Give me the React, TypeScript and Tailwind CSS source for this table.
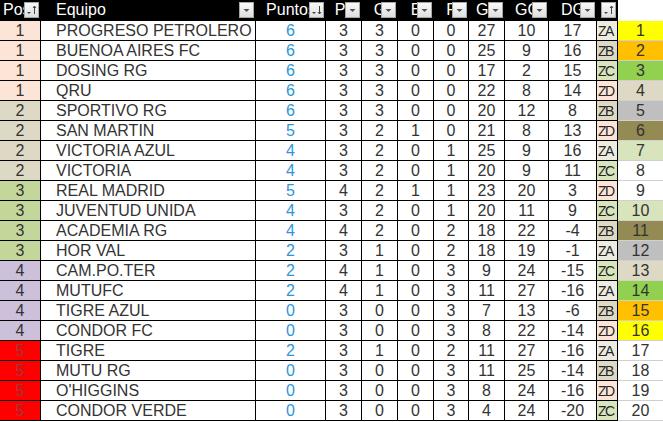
import React from 'react';

type Row = {
  pos: number;
  team: string;
  pts: number;
  pj: number;
  g: number;
  e: number;
  p: number;
  gf: number;
  gc: number;
  dg: number;
  zone: string;
  rank: number;
};

const rows: Row[] = [
  { pos: 1, team: 'PROGRESO PETROLERO', pts: 6, pj: 3, g: 3, e: 0, p: 0, gf: 27, gc: 10, dg: 17, zone: 'ZA', rank: 1 },
  { pos: 1, team: 'BUENOA AIRES FC', pts: 6, pj: 3, g: 3, e: 0, p: 0, gf: 25, gc: 9, dg: 16, zone: 'ZB', rank: 2 },
  { pos: 1, team: 'DOSING RG', pts: 6, pj: 3, g: 3, e: 0, p: 0, gf: 17, gc: 2, dg: 15, zone: 'ZC', rank: 3 },
  { pos: 1, team: 'QRU', pts: 6, pj: 3, g: 3, e: 0, p: 0, gf: 22, gc: 8, dg: 14, zone: 'ZD', rank: 4 },
  { pos: 2, team: 'SPORTIVO RG', pts: 6, pj: 3, g: 3, e: 0, p: 0, gf: 20, gc: 12, dg: 8, zone: 'ZB', rank: 5 },
  { pos: 2, team: 'SAN MARTIN', pts: 5, pj: 3, g: 2, e: 1, p: 0, gf: 21, gc: 8, dg: 13, zone: 'ZD', rank: 6 },
  { pos: 2, team: 'VICTORIA AZUL', pts: 4, pj: 3, g: 2, e: 0, p: 1, gf: 25, gc: 9, dg: 16, zone: 'ZA', rank: 7 },
  { pos: 2, team: 'VICTORIA', pts: 4, pj: 3, g: 2, e: 0, p: 1, gf: 20, gc: 9, dg: 11, zone: 'ZC', rank: 8 },
  { pos: 3, team: 'REAL MADRID', pts: 5, pj: 4, g: 2, e: 1, p: 1, gf: 23, gc: 20, dg: 3, zone: 'ZD', rank: 9 },
  { pos: 3, team: 'JUVENTUD UNIDA', pts: 4, pj: 3, g: 2, e: 0, p: 1, gf: 20, gc: 11, dg: 9, zone: 'ZC', rank: 10 },
  { pos: 3, team: 'ACADEMIA RG', pts: 4, pj: 4, g: 2, e: 0, p: 2, gf: 18, gc: 22, dg: -4, zone: 'ZB', rank: 11 },
  { pos: 3, team: 'HOR VAL', pts: 2, pj: 3, g: 1, e: 0, p: 2, gf: 18, gc: 19, dg: -1, zone: 'ZA', rank: 12 },
  { pos: 4, team: 'CAM.PO.TER', pts: 2, pj: 4, g: 1, e: 0, p: 3, gf: 9, gc: 24, dg: -15, zone: 'ZC', rank: 13 },
  { pos: 4, team: 'MUTUFC', pts: 2, pj: 4, g: 1, e: 0, p: 3, gf: 11, gc: 27, dg: -16, zone: 'ZA', rank: 14 },
  { pos: 4, team: 'TIGRE AZUL', pts: 0, pj: 3, g: 0, e: 0, p: 3, gf: 7, gc: 13, dg: -6, zone: 'ZB', rank: 15 },
  { pos: 4, team: 'CONDOR FC', pts: 0, pj: 3, g: 0, e: 0, p: 3, gf: 8, gc: 22, dg: -14, zone: 'ZD', rank: 16 },
  { pos: 5, team: 'TIGRE', pts: 2, pj: 3, g: 1, e: 0, p: 2, gf: 11, gc: 27, dg: -16, zone: 'ZA', rank: 17 },
  { pos: 5, team: 'MUTU RG', pts: 0, pj: 3, g: 0, e: 0, p: 3, gf: 11, gc: 25, dg: -14, zone: 'ZB', rank: 18 },
  { pos: 5, team: "O'HIGGINS", pts: 0, pj: 3, g: 0, e: 0, p: 3, gf: 8, gc: 24, dg: -16, zone: 'ZD', rank: 19 },
  { pos: 5, team: 'CONDOR VERDE', pts: 0, pj: 3, g: 0, e: 0, p: 3, gf: 4, gc: 24, dg: -20, zone: 'ZC', rank: 20 },
];

const posColors: Record<number, string> = {
  1: 'bg-[#fce4d6] text-[#333333]',
  2: 'bg-[#ddd9c4] text-[#333333]',
  3: 'bg-[#c4d79b] text-[#333333]',
  4: 'bg-[#ccc0da] text-[#333333]',
  5: 'bg-[#ff0000] text-[#9a3a3a]',
};

const zoneColors: Record<string, string> = {
  ZA: 'bg-[#eeece1]',
  ZB: 'bg-[#ddd9c4]',
  ZC: 'bg-[#d8e4bc]',
  ZD: 'bg-[#fce4d6]',
};

const rankColors: Record<number, string> = {
  1: 'bg-[#ffff00]',
  2: 'bg-[#ffc000]',
  3: 'bg-[#92d050]',
  4: 'bg-[#ddd9c4]',
  5: 'bg-[#bfbfbf]',
  6: 'bg-[#948a54]',
  7: 'bg-[#d8e4bc]',
  10: 'bg-[#d8e4bc]',
  11: 'bg-[#948a54]',
  12: 'bg-[#bfbfbf]',
  13: 'bg-[#ddd9c4]',
  14: 'bg-[#92d050]',
  15: 'bg-[#ffc000]',
  16: 'bg-[#ffff00]',
};

// small excel-like filter button
function FilterButton({ sort }: { sort?: 'asc' | 'desc' }) {
  return (
    <div className="absolute right-[2px] top-[2px] w-[15px] h-[16px] bg-gradient-to-b from-[#fafafa] to-[#dedede] border border-[#a6a6a6] flex items-center justify-center">
      <svg width="13" height="14" viewBox="0 0 13 14">
        {sort ? (
          <>
            <path d="M2 9 L6 9 L4 11 Z" fill="#444" />
            {sort === 'asc' ? (
              <path d="M9.5 3 L9.5 11 M8 5 L9.5 3 L11 5" stroke="#444" strokeWidth="1" fill="none" />
            ) : (
              <path d="M9.5 3 L9.5 11 M8 9 L9.5 11 L11 9" stroke="#444" strokeWidth="1" fill="none" />
            )}
          </>
        ) : (
          <path d="M3.5 6 L9.5 6 L6.5 9 Z" fill="#555" />
        )}
      </svg>
    </div>
  );
}

const headers: { label: string; align: string; sort?: 'asc' | 'desc'; filter: boolean }[] = [
  { label: 'Pos', align: 'justify-start pl-[3px]', sort: 'asc', filter: true },
  { label: 'Equipo', align: 'justify-start pl-[15px]', filter: true },
  { label: 'Puntos', align: 'justify-center', sort: 'desc', filter: true },
  { label: 'PJ', align: 'justify-center', filter: true },
  { label: 'G', align: 'justify-center', filter: true },
  { label: 'E', align: 'justify-center', filter: true },
  { label: 'P', align: 'justify-center', filter: true },
  { label: 'GF', align: 'justify-center', filter: true },
  { label: 'GC', align: 'justify-center', filter: true },
  { label: 'DG', align: 'justify-center', filter: true },
  { label: '', align: 'justify-center', sort: 'asc', filter: true },
];

const cell = 'h-[20px] border-b border-r border-black flex items-end leading-none pb-[1px] overflow-hidden whitespace-nowrap';

export default function App() {
  return (
    <div className="w-[663px] h-[422px] bg-white overflow-hidden text-[16px] text-[#333333]" style={{ fontFamily: '"Liberation Sans", Arial, sans-serif' }}>
      <div className="grid grid-cols-[41px_215px_70px_36px_36px_36px_35px_36px_44px_48px_21px_45px]">
        {headers.map((h, i) => (
          <div key={i} className={`relative h-[21px] bg-black text-white flex items-end pb-[3px] leading-none overflow-hidden whitespace-nowrap ${h.align}`}>
            <span>{h.label}</span>
            {h.filter && <FilterButton sort={h.sort} />}
          </div>
        ))}
        <div className="h-[21px] bg-white" />

        {rows.map((r) => (
          <React.Fragment key={r.rank}>
            <div className={`${cell} justify-center ${posColors[r.pos]}`}>{r.pos}</div>
            <div className={`${cell} pl-[15px]`}>{r.team}</div>
            <div className={`${cell} justify-center text-[#2e96d6]`}>{r.pts}</div>
            <div className={`${cell} justify-center`}>{r.pj}</div>
            <div className={`${cell} justify-center`}>{r.g}</div>
            <div className={`${cell} justify-center`}>{r.e}</div>
            <div className={`${cell} justify-center`}>{r.p}</div>
            <div className={`${cell} justify-center`}>{r.gf}</div>
            <div className={`${cell} justify-center`}>{r.gc}</div>
            <div className={`${cell} justify-center`}>{r.dg}</div>
            <div className={`${cell} pl-[1px] pb-[2px] text-[14px] tracking-[-1.5px] text-[#262626] ${zoneColors[r.zone]}`}>{r.zone}</div>
            <div className={`h-[20px] border-b border-[#d0d0d0] flex items-end justify-center leading-none pb-[1px] ${rankColors[r.rank] ?? 'bg-white'}`}>{r.rank}</div>
          </React.Fragment>
        ))}
      </div>
    </div>
  );
}
